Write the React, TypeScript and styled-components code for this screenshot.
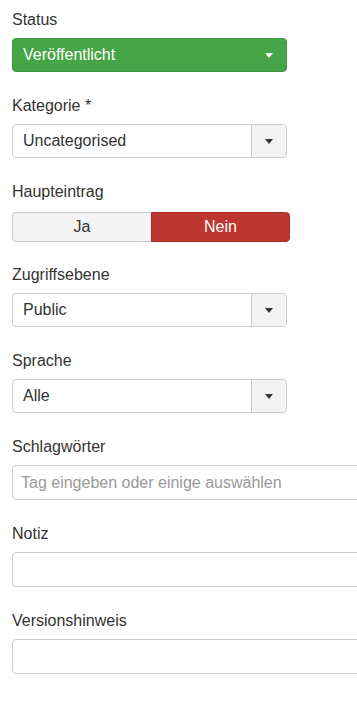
import React from 'react';
import styled, { createGlobalStyle, css } from 'styled-components';

const GlobalStyle = createGlobalStyle`
  html, body {
    margin: 0;
    padding: 0;
    background: #fff;
    overflow: hidden;
  }

  body {
    font-family: "Liberation Sans", Arial, sans-serif;
    color: #333;
  }
`;

const Panel = styled.div`
  display: flex;
  flex-direction: column;
  padding: 10px 0 0 12px;
  width: 357px;
  box-sizing: border-box;
  overflow: hidden;
`;

const Field = styled.div`
  display: flex;
  flex-direction: column;
  margin-bottom: 24px;
`;

const Label = styled.label<{ $gap?: number }>`
  font-size: 16px;
  line-height: 20px;
  color: #333;
  margin-bottom: ${({ $gap }) => $gap ?? 8}px;
`;

const SelectBox = styled.div<{ $success?: boolean }>`
  display: flex;
  width: 275px;
  height: 34px;
  box-sizing: border-box;
  border: 1px solid #ccc;
  border-radius: 4px;
  background: #fff;
  color: #333;
  font-size: 16px;
  overflow: hidden;

  ${({ $success }) => $success && css`
    background: #46a546;
    border-color: #3f963f;
    color: #fff;
  `}
`;

const SelectValue = styled.span`
  flex: 1;
  padding-left: 10px;
  line-height: 32px;
  white-space: nowrap;
`;

const SelectButton = styled.span<{ $plain?: boolean }>`
  display: flex;
  align-items: center;
  justify-content: center;
  width: 35px;
  box-sizing: border-box;
  border-left: 1px solid #ccc;
  background: #f3f3f3;

  ${({ $plain }) => $plain && css`
    border-left: none;
    background: transparent;
  `}
`;

const Caret = styled.span<{ $light?: boolean }>`
  width: 0;
  height: 0;
  border-left: 4.5px solid transparent;
  border-right: 4.5px solid transparent;
  border-top: 5px solid ${({ $light }) => ($light ? '#fff' : '#333')};
`;

const Toggle = styled.div`
  display: grid;
  grid-template-columns: 1fr 1fr;
  width: 278px;
  height: 30px;
  margin-bottom: -1px;
`;

const ToggleOption = styled.span<{ $active?: boolean }>`
  display: flex;
  align-items: center;
  justify-content: center;
  font-size: 16px;
  box-sizing: border-box;
  border: 1px solid #ccc;
  background: #f3f3f3;
  color: #333;

  &:first-child {
    border-radius: 4px 0 0 4px;
    border-right: none;
  }

  &:last-child {
    border-radius: 0 4px 4px 0;
  }

  ${({ $active }) => $active && css`
    background: #bd362f;
    border-color: #a52e28;
    color: #fff;
  `}
`;

const TextInput = styled.input`
  width: 400px;
  height: 35px;
  box-sizing: border-box;
  border: 1px solid #ccc;
  border-radius: 4px;
  padding: 0 8px;
  font-family: inherit;
  font-size: 16px;
  color: #333;
  background: #fff;
  outline: none;

  &::placeholder {
    color: #999;
  }
`;

function Select ({ value, success }: { value: string; success?: boolean }): React.ReactElement {
  return (
    <SelectBox $success={success}>
      <SelectValue>{value}</SelectValue>
      <SelectButton $plain={success}>
        <Caret $light={success} />
      </SelectButton>
    </SelectBox>
  );
}

export default function App (): React.ReactElement {
  return (
    <>
      <GlobalStyle />
      <Panel>
        <Field>
          <Label>Status</Label>
          <Select success value='Veröffentlicht' />
        </Field>
        <Field>
          <Label>Kategorie *</Label>
          <Select value='Uncategorised' />
        </Field>
        <Field>
          <Label $gap={10}>Haupteintrag</Label>
          <Toggle>
            <ToggleOption>Ja</ToggleOption>
            <ToggleOption $active>Nein</ToggleOption>
          </Toggle>
        </Field>
        <Field>
          <Label>Zugriffsebene</Label>
          <Select value='Public' />
        </Field>
        <Field>
          <Label>Sprache</Label>
          <Select value='Alle' />
        </Field>
        <Field>
          <Label>Schlagwörter</Label>
          <TextInput placeholder='Tag eingeben oder einige auswählen' />
        </Field>
        <Field>
          <Label>Notiz</Label>
          <TextInput />
        </Field>
        <Field>
          <Label>Versionshinweis</Label>
          <TextInput />
        </Field>
      </Panel>
    </>
  );
}
